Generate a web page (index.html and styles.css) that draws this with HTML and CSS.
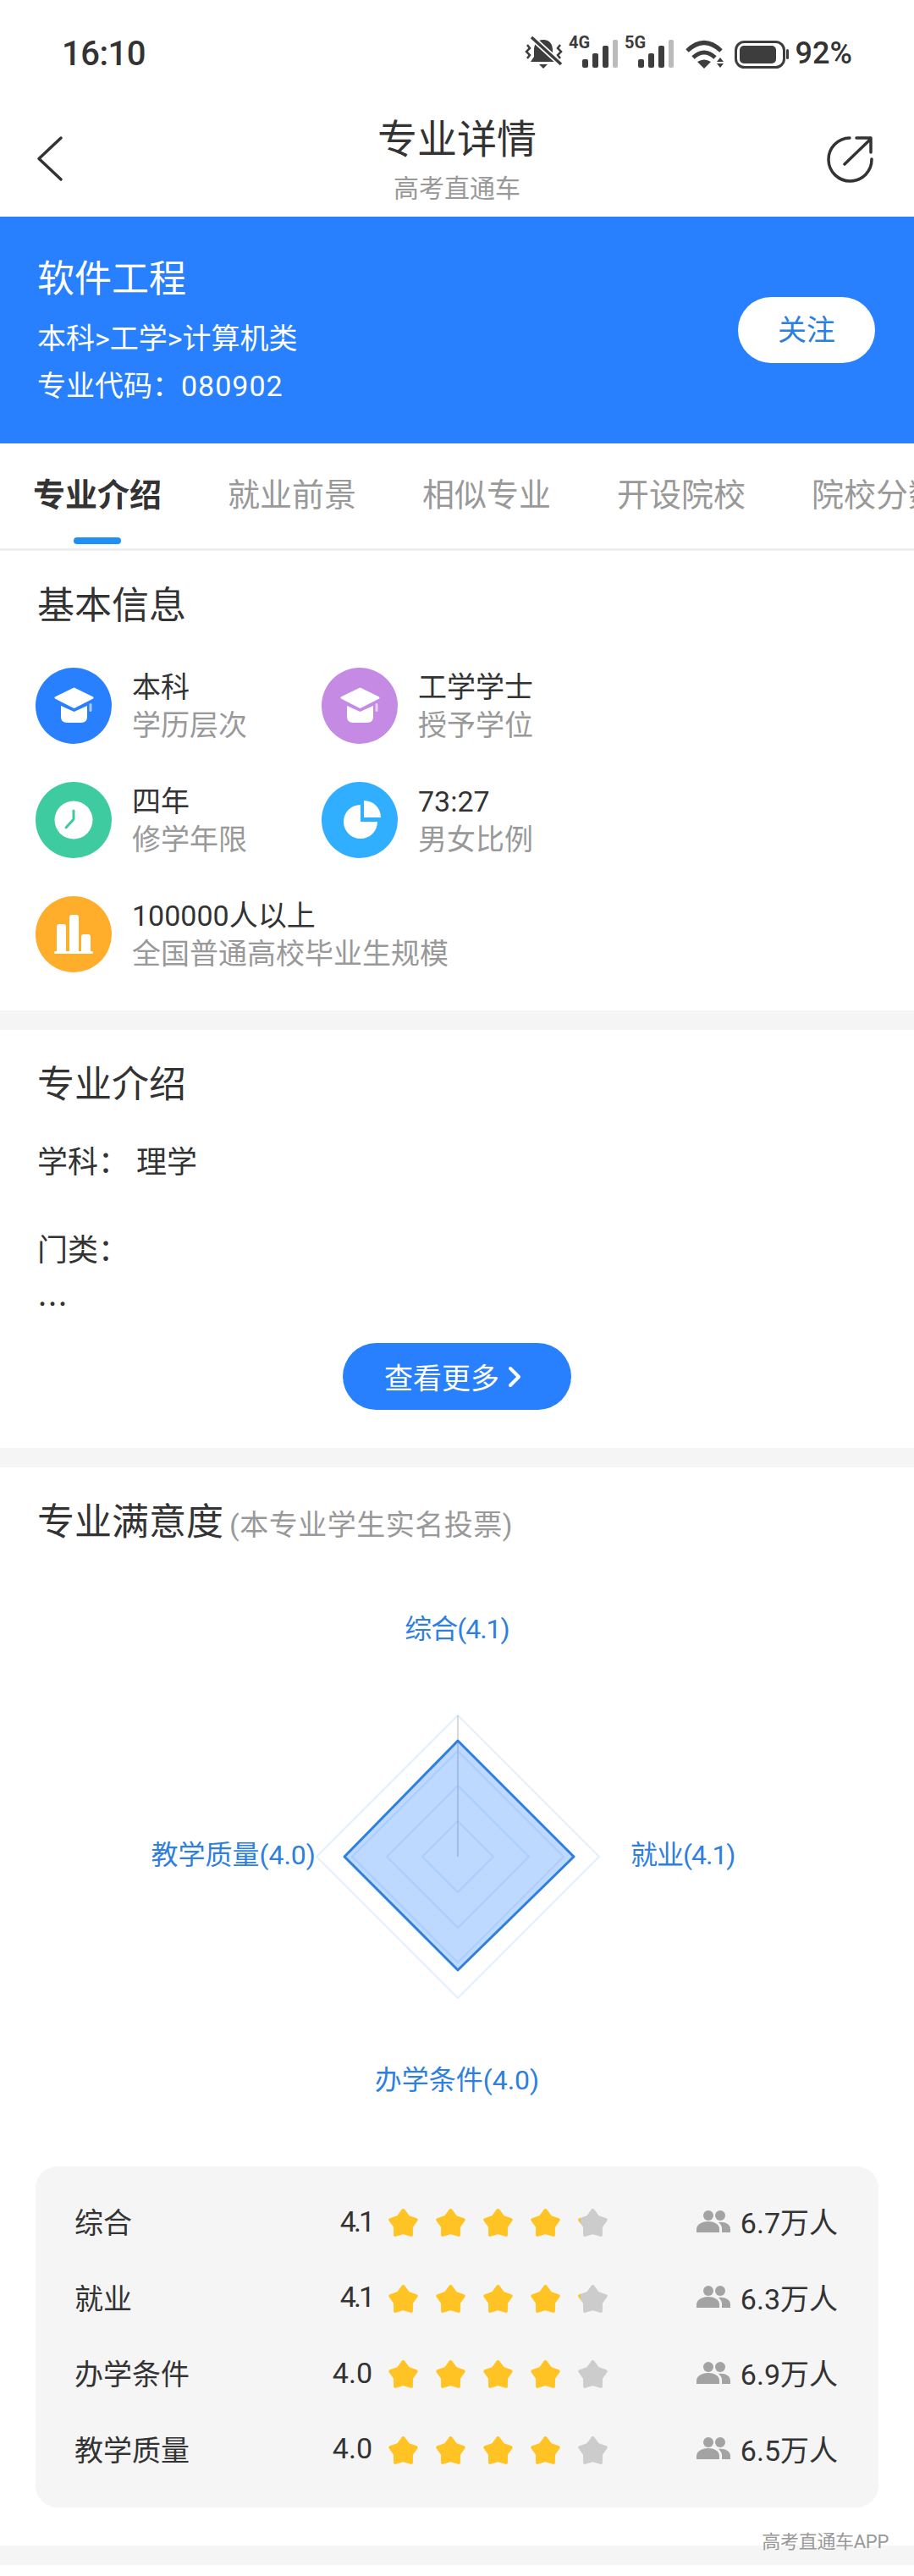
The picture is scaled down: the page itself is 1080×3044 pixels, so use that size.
FILE: index.html
```html
<!DOCTYPE html>
<html>
<head>
    <title>专业详情</title>
    <link rel="stylesheet" href="styles.css">
</head>
<body>
<svg class="defs" width="0" height="0">
    <defs>
        <path id="star" d="M18.5 2L24.4 9.9L33.7 13.1L28 21.1L27.9 30.9L18.5 28L9.1 30.9L9 21.1L3.3 13.1L12.6 9.9Z" stroke-width="4" stroke-linejoin="round"/>
        <clipPath id="sliver"><rect x="0" y="0" width="4" height="33"/></clipPath>
        <g id="cap">
            <path d="M30 45L45.5 52L61 45V58Q61 65 54 65H37Q30 65 30 58Z" fill="#fff"/>
            <path d="M24 35.5L45.5 25L67 35.5L45.5 46.5Z" fill="#fff" stroke="#fff" stroke-width="3" stroke-linejoin="round"/>
            <rect x="63.5" y="42" width="3" height="10" rx="1.5" fill="#fff" opacity=".6"/>
        </g>
        <g id="people" fill="#a3a3a3">
            <circle cx="14" cy="6" r="6"/>
            <circle cx="28" cy="6" r="6"/>
            <path d="M0 26V22C0 16 8 13 14 13C20 13 27 16 27 22V26Z"/>
            <path d="M30 26V21C30 18 28 16 26 14C33 13 40 16 40 22V26Z"/>
        </g>
    </defs>
</svg>

<div class="status">
    <span class="time">16:10</span>
    <div class="statusRight">
        <svg class="statusIcons" width="312" height="46" viewBox="0 -6 312 46" fill="#3d3d3d">
            <path d="M22 4C14 4 11 10 11 16V24L7 30H37L33 24V16C33 10 30 4 22 4Z"/>
            <path d="M17 33H27L22 38Z"/>
            <path d="M8 1L43 33" stroke="#fff" stroke-width="7"/>
            <path d="M8 1L43 33" stroke="#3d3d3d" stroke-width="3.5"/>
            <path d="M3 10L6 14L2 18L6 22L3 26M42 10L39 14L43 18L39 22L42 26" fill="none" stroke="#3d3d3d" stroke-width="2.5"/>
            <text class="netText" x="52" y="14">4G</text>
            <rect x="68" y="27" width="7" height="10" rx="2"/>
            <rect x="80" y="20" width="7" height="17" rx="2"/>
            <rect x="92" y="11" width="7" height="26" rx="2"/>
            <rect x="104" y="4" width="6" height="33" rx="2" fill="#bbb"/>
            <text class="netText" x="118" y="14">5G</text>
            <rect x="134" y="27" width="7" height="10" rx="2"/>
            <rect x="146" y="20" width="7" height="17" rx="2"/>
            <rect x="158" y="11" width="7" height="26" rx="2"/>
            <rect x="170" y="4" width="6" height="33" rx="2" fill="#bbb"/>
            <path d="M192 17Q212 -2 232 17M199 25Q212 13 225 25" fill="none" stroke="#3d3d3d" stroke-width="5"/>
            <path d="M204 30Q212 25 220 30L212 38Z"/>
            <path d="M231 25L235 30H227ZM227 32H235L231 37Z"/>
            <rect x="249.5" y="6.5" width="57" height="30" rx="10" fill="none" stroke="#3d3d3d" stroke-width="3"/>
            <rect x="254" y="11" width="43" height="21" rx="5"/>
            <rect x="309" y="15" width="3" height="12" rx="1.5"/>
        </svg>
        <span class="battery">92%</span>
    </div>
</div>

<div class="nav">
    <svg class="back" width="40" height="60" viewBox="0 0 40 60">
        <path d="M31 4L5 28.500L31 53" fill="none" stroke="#333" stroke-width="3.500" stroke-linecap="round" stroke-linejoin="round"/>
    </svg>
    <div class="navTitle">
        <div class="navMain">专业详情</div>
        <div class="navSub">高考直通车</div>
    </div>
    <svg class="share" width="90" height="90" viewBox="0 0 90 90">
        <path d="M44 23A25.500 25.500 0 1 0 70 48M38 54L68 25M52 23H69V40" fill="none" stroke="#333" stroke-width="3.500" stroke-linecap="round" stroke-linejoin="round"/>
    </svg>
</div>

<div class="hero">
    <div>
        <div class="heroName">软件工程</div>
        <div class="heroPath">本科&gt;工学&gt;计算机类</div>
        <div class="heroCode">专业代码：<span class="codeNum">080902</span></div>
    </div>
    <div class="follow">关注</div>
</div>

<ul class="tabs">
    <li class="active">专业介绍</li>
    <li>就业前景</li>
    <li>相似专业</li>
    <li>开设院校</li>
    <li>院校分数</li>
</ul>

<div class="section info">
    <h2>基本信息</h2>
    <div class="infoGrid">
        <div class="infoItem">
            <svg class="infoIcon" width="90" height="90" viewBox="0 0 90 90">
                <circle cx="45" cy="45" r="45" fill="#2880ff"/>
                <use href="#cap"/>
            </svg>
            <div><p>本科</p><p class="grey">学历层次</p></div>
        </div>
        <div class="infoItem">
            <svg class="infoIcon" width="90" height="90" viewBox="0 0 90 90">
                <circle cx="45" cy="45" r="45" fill="#c58ae4"/>
                <use href="#cap"/>
            </svg>
            <div><p>工学学士</p><p class="grey">授予学位</p></div>
        </div>
        <div class="infoItem">
            <svg class="infoIcon" width="90" height="90" viewBox="0 0 90 90">
                <circle cx="45" cy="45" r="45" fill="#3fcba0"/>
                <circle cx="45" cy="45" r="22.500" fill="#fff"/>
                <path d="M45 34V44L36 54" fill="none" stroke="#3fcba0" stroke-width="3" stroke-linecap="round" stroke-linejoin="round"/>
            </svg>
            <div><p>四年</p><p class="grey">修学年限</p></div>
        </div>
        <div class="infoItem">
            <svg class="infoIcon" width="90" height="90" viewBox="0 0 90 90">
                <circle cx="45" cy="45" r="45" fill="#30aeff"/>
                <path d="M46 27A20 20 0 1 0 66 47H46Z" fill="#fff"/>
                <path d="M50 42V22A20 20 0 0 1 70 42Z" fill="#fff"/>
            </svg>
            <div><p>73:27</p><p class="grey">男女比例</p></div>
        </div>
        <div class="infoItem wide">
            <svg class="infoIcon" width="90" height="90" viewBox="0 0 90 90">
                <circle cx="45" cy="45" r="45" fill="#ffae2b"/>
                <path d="M25 65V36Q25 33 28 33H33Q36 33 36 36V65ZM40 65V25Q40 22 43 22H48Q51 22 51 25V65ZM54 65V48Q54 45 57 45H62Q65 45 65 48V65Z" fill="#fff"/>
                <rect x="22" y="65" width="46" height="3" rx="1.500" fill="#fff"/>
            </svg>
            <div><p>100000人以上</p><p class="grey">全国普通高校毕业生规模</p></div>
        </div>
    </div>
</div>

<div class="gap"></div>

<div class="section intro">
    <h2>专业介绍</h2>
    <p class="introLine">学科：&nbsp;理学</p>
    <p class="introLine spaced">门类：</p>
    <p class="introLine dots">…</p>
    <div class="more">
        查看更多
        <svg width="16" height="26" viewBox="0 0 16 26">
            <path d="M3 3L13 13L3 23" fill="none" stroke="#fff" stroke-width="4" stroke-linecap="round" stroke-linejoin="round"/>
        </svg>
    </div>
</div>

<div class="gap"></div>

<div class="section rating">
    <h2>专业满意度<span class="note">(本专业学生实名投票)</span></h2>
    <div class="chart">
        <span class="axisLabel top tight">综合(4.1)</span>
        <span class="axisLabel left">教学质量(4.0)</span>
        <span class="axisLabel right tight">就业(4.1)</span>
        <span class="axisLabel bottom">办学条件(4.0)</span>
        <svg class="radar" width="340" height="340" viewBox="-170 -170 340 340">
            <g fill="none" stroke="#2880ff" stroke-opacity=".13" stroke-width="2">
                <path d="M0 -167L167 0L0 167L-167 0Z"/>
                <path d="M0 -125L125 0L0 125L-125 0Z"/>
                <path d="M0 -84L84 0L0 84L-84 0Z"/>
                <path d="M0 -42L42 0L0 42L-42 0Z"/>
            </g>
            <path d="M0 0V-167" stroke="#ccc" stroke-width="1.500"/>
            <path d="M0 -137L137 0L0 134L-134 0Z" fill="#2880ff" fill-opacity=".3" stroke="#2F7FDE" stroke-width="3" stroke-linejoin="round"/>
        </svg>
    </div>
    <div class="scores">
        <div class="scoreRow">
            <span class="scoreName">综合</span>
            <span class="scoreValue narrow">4.1</span>
            <div class="stars">
                <svg width="37" height="33" viewBox="0 0 37 33" class="on"><use href="#star"/></svg>
                <svg width="37" height="33" viewBox="0 0 37 33" class="on"><use href="#star"/></svg>
                <svg width="37" height="33" viewBox="0 0 37 33" class="on"><use href="#star"/></svg>
                <svg width="37" height="33" viewBox="0 0 37 33" class="on"><use href="#star"/></svg>
                <svg width="37" height="33" viewBox="0 0 37 33" class="off"><use href="#star"/><g clip-path="url(#sliver)"><use href="#star" class="tint"/></g></svg>
            </div>
            <div class="count">
                <svg width="40" height="26" viewBox="0 0 40 26"><use href="#people"/></svg>
                <span>6.7万人</span>
            </div>
        </div>
        <div class="scoreRow">
            <span class="scoreName">就业</span>
            <span class="scoreValue narrow">4.1</span>
            <div class="stars">
                <svg width="37" height="33" viewBox="0 0 37 33" class="on"><use href="#star"/></svg>
                <svg width="37" height="33" viewBox="0 0 37 33" class="on"><use href="#star"/></svg>
                <svg width="37" height="33" viewBox="0 0 37 33" class="on"><use href="#star"/></svg>
                <svg width="37" height="33" viewBox="0 0 37 33" class="on"><use href="#star"/></svg>
                <svg width="37" height="33" viewBox="0 0 37 33" class="off"><use href="#star"/><g clip-path="url(#sliver)"><use href="#star" class="tint"/></g></svg>
            </div>
            <div class="count">
                <svg width="40" height="26" viewBox="0 0 40 26"><use href="#people"/></svg>
                <span>6.3万人</span>
            </div>
        </div>
        <div class="scoreRow">
            <span class="scoreName">办学条件</span>
            <span class="scoreValue">4.0</span>
            <div class="stars">
                <svg width="37" height="33" viewBox="0 0 37 33" class="on"><use href="#star"/></svg>
                <svg width="37" height="33" viewBox="0 0 37 33" class="on"><use href="#star"/></svg>
                <svg width="37" height="33" viewBox="0 0 37 33" class="on"><use href="#star"/></svg>
                <svg width="37" height="33" viewBox="0 0 37 33" class="on"><use href="#star"/></svg>
                <svg width="37" height="33" viewBox="0 0 37 33" class="off"><use href="#star"/></svg>
            </div>
            <div class="count">
                <svg width="40" height="26" viewBox="0 0 40 26"><use href="#people"/></svg>
                <span>6.9万人</span>
            </div>
        </div>
        <div class="scoreRow">
            <span class="scoreName">教学质量</span>
            <span class="scoreValue">4.0</span>
            <div class="stars">
                <svg width="37" height="33" viewBox="0 0 37 33" class="on"><use href="#star"/></svg>
                <svg width="37" height="33" viewBox="0 0 37 33" class="on"><use href="#star"/></svg>
                <svg width="37" height="33" viewBox="0 0 37 33" class="on"><use href="#star"/></svg>
                <svg width="37" height="33" viewBox="0 0 37 33" class="on"><use href="#star"/></svg>
                <svg width="37" height="33" viewBox="0 0 37 33" class="off"><use href="#star"/></svg>
            </div>
            <div class="count">
                <svg width="40" height="26" viewBox="0 0 40 26"><use href="#people"/></svg>
                <span>6.5万人</span>
            </div>
        </div>
    </div>
</div>

<div class="gap"></div>
<div class="watermark">高考直通车APP</div>
</body>
</html>
```

FILE: styles.css
```css
html, body {
    width: 100%;
    height: 100%;
    padding: 0px;
    margin: 0px;
    overflow: hidden;
}

body {
    position: relative;
    width: 1080px;
    height: 3044px;
    background-color: #FFF;
    color: #333;
    font-family: Roboto, "Noto Sans CJK SC", sans-serif;
    font-size: 34px;
}

p, h2, ul {
    margin: 0px;
    padding: 0px;
}

.defs {
    position: absolute;
}

.grey {
    color: #999;
}

.gap {
    height: 23px;
    background-color: #F5F5F5;
}

/* status bar */
.status {
    display: flex;
    justify-content: space-between;
    align-items: center;
    box-sizing: border-box;
    height: 110px;
    padding: 16px 73px 0px;
}

.time {
    font-size: 40px;
    font-weight: 500;
    letter-spacing: -0.5px;
}

.statusRight {
    display: flex;
    align-items: center;
    gap: 8px;
}

.statusIcons {
    margin-bottom: 6px;
}

.netText {
    font-family: Roboto, sans-serif;
    font-size: 20px;
    font-weight: 700;
}

.battery {
    font-size: 36px;
    font-weight: 500;
}

/* nav */
.nav {
    display: grid;
    grid-template-columns: 1fr auto 1fr;
    box-sizing: border-box;
    height: 146px;
    padding: 0px 30px 0px 41px;
}

.back {
    margin-top: 49px;
}

.share {
    justify-self: end;
    margin-top: 30px;
}

.navTitle {
    padding-top: 27px;
    padding-right: 11px;
    text-align: center;
}

.navMain {
    font-size: 47px;
    line-height: 56px;
}

.navSub {
    margin-top: 10px;
    color: #999;
    font-size: 30px;
    line-height: 40px;
}

/* hero */
.hero {
    display: flex;
    justify-content: space-between;
    align-items: center;
    box-sizing: border-box;
    height: 268px;
    padding: 0px 46px 0px 44px;
    background-color: #2880FF;
    color: #FFF;
}

.heroName {
    padding-top: 4px;
    font-size: 44px;
    line-height: 60px;
}

.heroPath {
    margin-top: 12px;
    line-height: 56px;
}

.heroCode {
    line-height: 56px;
}

.codeNum {
    letter-spacing: 1px;
}

.follow {
    width: 162px;
    height: 78px;
    border-radius: 39px;
    background-color: #FFF;
    color: #2A7FE0;
    line-height: 78px;
    text-align: center;
}

/* tabs */
.tabs {
    display: flex;
    box-sizing: border-box;
    height: 127px;
    border-bottom: 3px solid #EEE;
    list-style-type: none;
    overflow: hidden;
}

.tabs > li {
    position: relative;
    flex: none;
    padding: 35px 39px 0px;
    color: #999;
    font-size: 38px;
    line-height: 52px;
}

.tabs > .active {
    color: #333;
    font-weight: 700;
}

.tabs > .active:after {
    content: '';
    position: absolute;
    top: 111px;
    left: 87px;
    width: 56px;
    height: 8px;
    border-radius: 4px;
    background-color: #2090F5;
}

/* sections */
.section {
    padding-top: 35px;
}

.section h2 {
    padding-left: 44px;
    font-size: 44px;
    font-weight: 400;
    line-height: 60px;
}

.info {
    padding-bottom: 45px;
}

.infoGrid {
    display: grid;
    grid-template-columns: 338px auto;
    row-gap: 45px;
    margin-top: 43px;
    padding-left: 42px;
}

.infoItem {
    display: flex;
    gap: 24px;
    line-height: 45px;
}

.infoItem p {
    position: relative;
    top: 1px;
}

.infoIcon {
    flex: none;
}

.wide {
    grid-column: 1 / 3;
}

.intro {
    padding-bottom: 45px;
}

.introLine {
    padding-left: 44px;
    font-size: 36px;
    line-height: 52px;
}

.intro h2 {
    margin-bottom: 36px;
}

.spaced {
    margin-top: 52px;
}

.dots {
    margin-top: 9px;
    font-family: "Noto Sans CJK SC", sans-serif;
}

.more {
    display: flex;
    justify-content: center;
    align-items: center;
    gap: 10px;
    box-sizing: border-box;
    width: 270px;
    height: 79px;
    margin: 22px auto 0px;
    padding-right: 10px;
    border-radius: 40px;
    background-color: #2880FF;
    color: #FFF;
}

.note {
    margin-left: 7px;
    color: #999;
    font-size: 34px;
    letter-spacing: 0.5px;
}

/* radar */
.chart {
    position: relative;
    height: 728px;
}

.radar {
    position: absolute;
    top: 192px;
    left: 371px;
}

.axisLabel {
    position: absolute;
    color: #2F7FDE;
    font-size: 32px;
    line-height: 50px;
    white-space: nowrap;
}

.tight {
    letter-spacing: -1px;
}

.top {
    top: 68px;
    left: 0px;
    right: 0px;
    text-align: center;
}

.bottom {
    top: 601px;
    left: 0px;
    right: 0px;
    text-align: center;
}

.left {
    top: 335px;
    right: 707px;
}

.right {
    top: 335px;
    left: 745px;
}

/* scores */
.scores {
    box-sizing: border-box;
    height: 403px;
    margin: 0px 42px 45px;
    padding: 20px 48px 0px 46px;
    border-radius: 26px;
    background-color: #F5F5F5;
}

.scoreRow {
    display: flex;
    align-items: center;
    height: 89.5px;
}

.scoreName {
    width: 260px;
}

.scoreValue {
    width: 92px;
    margin-right: 18px;
    text-align: right;
}

.narrow {
    letter-spacing: -3px;
}

.stars {
    display: flex;
    gap: 19px;
    position: relative;
    top: 2px;
}

.stars > .on {
    fill: #FFC423;
    stroke: #FFC423;
}

.stars > .off {
    fill: #CCC;
    stroke: #CCC;
}

.stars .tint {
    fill: #FFC423;
    stroke: #FFC423;
}

.count {
    display: flex;
    align-items: center;
    gap: 12px;
    margin-left: auto;
}

.watermark {
    position: absolute;
    top: 2990px;
    right: 30px;
    color: #999;
    font-size: 22px;
    letter-spacing: -0.3px;
    line-height: 28px;
}
```
